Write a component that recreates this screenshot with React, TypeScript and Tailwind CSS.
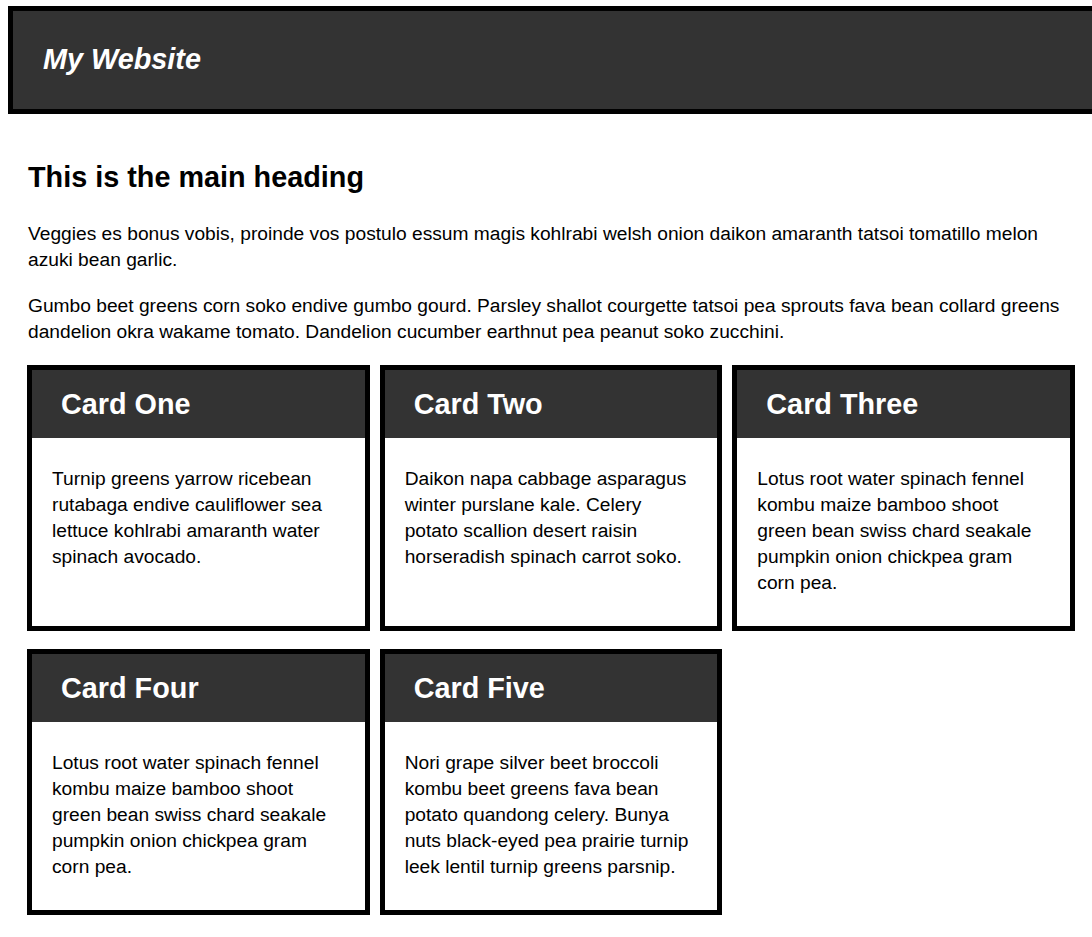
import React from 'react';

const cards = [
  {
    title: 'Card One',
    body: 'Turnip greens yarrow ricebean rutabaga endive cauliflower sea lettuce kohlrabi amaranth water spinach avocado.',
  },
  {
    title: 'Card Two',
    body: 'Daikon napa cabbage asparagus winter purslane kale. Celery potato scallion desert raisin horseradish spinach carrot soko.',
  },
  {
    title: 'Card Three',
    body: 'Lotus root water spinach fennel kombu maize bamboo shoot green bean swiss chard seakale pumpkin onion chickpea gram corn pea.',
  },
  {
    title: 'Card Four',
    body: 'Lotus root water spinach fennel kombu maize bamboo shoot green bean swiss chard seakale pumpkin onion chickpea gram corn pea.',
  },
  {
    title: 'Card Five',
    body: 'Nori grape silver beet broccoli kombu beet greens fava bean potato quandong celery. Bunya nuts black-eyed pea prairie turnip leek lentil turnip greens parsnip.',
  },
];

function Card({ title, body }: { title: string; body: string }) {
  return (
    <div className="flex flex-col border-[5px] border-black bg-white">
      <div className="flex h-[68px] items-center bg-[#333333] pl-[29px]">
        <h3 className="pt-[2px] text-[28.8px] font-bold text-white">{title}</h3>
      </div>
      <div className="px-[20px] pb-[30px] pt-[28px]">
        <p className="text-[19.2px] leading-[26px]">{body}</p>
      </div>
    </div>
  );
}

export default function App() {
  return (
    <div className="min-h-screen overflow-hidden bg-white font-['Liberation_Sans',Arial,sans-serif] text-black">
      <header className="ml-2 mt-[6px] flex h-[108px] w-[1100px] items-center border-[5px] border-black bg-[#333333] pl-[30px]">
        <h1 className="text-[28.8px] font-bold italic text-white">My Website</h1>
      </header>

      <main className="ml-[27px] w-[1048px]">
        <h2 className="mt-[47px] pl-px text-[28.8px] font-bold leading-8">This is the main heading</h2>
        <p className="mt-[28px] pl-px text-[19.2px] leading-[26px]">
          Veggies es bonus vobis, proinde vos postulo essum magis kohlrabi welsh onion daikon amaranth tatsoi tomatillo melon
          azuki bean garlic.
        </p>
        <p className="mt-[20px] pl-px text-[19.2px] leading-[26px]">
          Gumbo beet greens corn soko endive gumbo gourd. Parsley shallot courgette tatsoi pea sprouts fava bean collard greens
          dandelion okra wakame tomato. Dandelion cucumber earthnut pea peanut soko zucchini.
        </p>

        <div className="mt-[20px] grid grid-cols-3 gap-x-[10px] gap-y-[18px]">
          {cards.map((c) => (
            <Card key={c.title} title={c.title} body={c.body} />
          ))}
        </div>
      </main>
    </div>
  );
}
